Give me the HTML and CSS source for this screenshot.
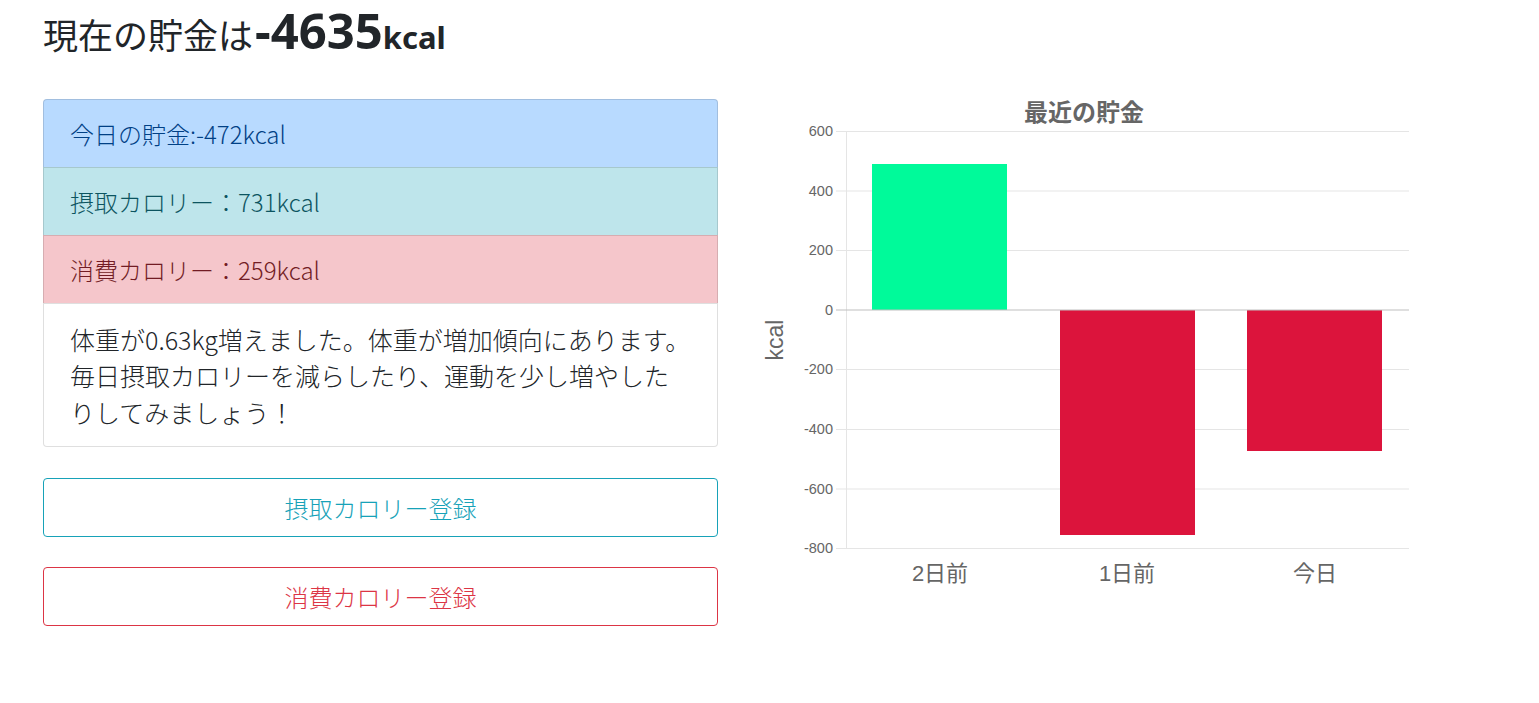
FILE: index.html
```html
<!DOCTYPE html>
<html lang="ja">
<head>
<meta charset="utf-8">
<title>貯金</title>
<link rel="stylesheet" href="styles.css">
</head>
<body>
<div class="page">
  <h1 class="title"><span class="title-text">現在の貯金は</span><span class="amount">-4635</span><span class="unit">kcal</span></h1>
  <div class="row">
    <div class="left">
      <ul class="list">
        <li class="item item-primary">今日の貯金:-472kcal</li>
        <li class="item item-info">摂取カロリー：731kcal</li>
        <li class="item item-danger">消費カロリー：259kcal</li>
        <li class="item item-note">体重が0.63kg増えました。体重が増加傾向にあります。毎日摂取カロリーを減らしたり、運動を少し増やしたりしてみましょう！</li>
      </ul>
      <button class="btn btn-info">摂取カロリー登録</button>
      <button class="btn btn-danger">消費カロリー登録</button>
    </div>
    <div class="chart">
      <svg class="chart-svg" width="660" height="510" viewBox="0 0 660 510">
        <text class="chart-title" x="324" y="22" text-anchor="middle">最近の貯金</text>
        <g class="grid">
          <line x1="76" y1="32.5" x2="649" y2="32.5"/>
          <line x1="76" y1="92" x2="649" y2="92"/>
          <line x1="76" y1="151.5" x2="649" y2="151.5"/>
          <line x1="76" y1="270.5" x2="649" y2="270.5"/>
          <line x1="76" y1="330.5" x2="649" y2="330.5"/>
          <line x1="76" y1="390" x2="649" y2="390"/>
          <line x1="76" y1="449.5" x2="649" y2="449.5"/>
          <line x1="86.5" y1="32" x2="86.5" y2="450"/>
        </g>
        <g class="ticks">
          <text x="73" y="37">600</text>
          <text x="73" y="96.5">400</text>
          <text x="73" y="156">200</text>
          <text x="73" y="215.5">0</text>
          <text x="73" y="275">-200</text>
          <text x="73" y="335">-400</text>
          <text x="73" y="394.5">-600</text>
          <text x="73" y="454">-800</text>
        </g>
        <rect class="bar-pos" x="112" y="65" width="135" height="146"/>
        <rect class="bar-neg" x="300" y="211" width="135" height="225"/>
        <rect class="bar-neg" x="487" y="211" width="135" height="141"/>
        <line class="zero" x1="76" y1="211" x2="649" y2="211"/>
        <g class="xlabels">
          <text x="180" y="482">2日前</text>
          <text x="367" y="482">1日前</text>
          <text x="555" y="482">今日</text>
        </g>
        <text class="axis-label" transform="translate(23 241) rotate(-90)" text-anchor="middle">kcal</text>
      </svg>
    </div>
  </div>
</div>
</body>
</html>
```
FILE: styles.css
```css
html, body {
  margin: 0;
  padding: 0;
  background: #fff;
}

body {
  font-family: "Noto Sans CJK JP", "Noto Sans", sans-serif;
  color: #212529;
}

.page {
  padding: 0 43px;
}

.title {
  display: flex;
  align-items: baseline;
  height: 99px;
  margin: 0;
  padding-top: 6px;
  box-sizing: border-box;
  line-height: 1;
  font-weight: 400;
  color: #212529;
}

.title-text {
  font-size: 35px;
  font-weight: 400;
}

.amount {
  font-family: "Noto Sans", "Noto Sans CJK JP", sans-serif;
  font-size: 49px;
  font-weight: 700;
  margin-left: 2px;
}

.unit {
  font-family: "Noto Sans", "Noto Sans CJK JP", sans-serif;
  font-size: 31px;
  font-weight: 700;
}

.row {
  display: flex;
  align-items: flex-start;
  gap: 42px;
}

.left {
  width: 675px;
  flex: none;
}

.list {
  list-style: none;
  margin: 0;
  padding: 0;
}

.item {
  border: 1px solid rgba(0, 0, 0, 0.125);
  margin-top: -1px;
  padding: 15.5px 26px;
  font-size: 24px;
  line-height: 36px;
  font-weight: 300;
}

.item:first-child {
  margin-top: 0;
  border-top-left-radius: 4px;
  border-top-right-radius: 4px;
}

.item:last-child {
  border-bottom-left-radius: 4px;
  border-bottom-right-radius: 4px;
}

.item-primary {
  background: #b8daff;
  color: #004085;
}

.item-info {
  background: #bee5eb;
  color: #0c5460;
}

.item-danger {
  background: #f5c6cb;
  color: #721c24;
}

.item-note {
  background: #fff;
  color: #212529;
  font-size: 25px;
  line-height: 36.5px;
  padding-top: 16.5px;
  padding-bottom: 16px;
}

.btn {
  display: block;
  width: 100%;
  box-sizing: border-box;
  margin-top: 30px;
  padding: 10.5px 16px;
  background: #fff;
  border: 1px solid;
  border-radius: 4px;
  font-family: "Noto Sans CJK JP", "Noto Sans", sans-serif;
  font-size: 24px;
  line-height: 36px;
  font-weight: 300;
  text-align: center;
  cursor: pointer;
}

.list + .btn {
  margin-top: 31px;
}

.btn-info {
  color: #17a2b8;
  border-color: #17a2b8;
}

.btn-danger {
  color: #dc3545;
  border-color: #dc3545;
}

.chart {
  flex: none;
  width: 660px;
}

.chart-svg {
  display: block;
  font-family: "Liberation Sans", "Noto Sans CJK JP", sans-serif;
}

.chart-title {
  font-size: 24px;
  font-weight: 700;
  fill: #666;
}

.grid line {
  stroke: #e5e5e5;
  stroke-width: 1;
}

.zero {
  stroke: #bfbfbf;
  stroke-width: 1;
}

.ticks text {
  font-size: 14.5px;
  fill: #666;
  text-anchor: end;
}

.bar-pos {
  fill: #00fa9a;
}

.bar-neg {
  fill: #dc143c;
}

.xlabels text {
  font-size: 22px;
  fill: #666;
  text-anchor: middle;
}

.axis-label {
  font-size: 23px;
  fill: #666;
}
```
